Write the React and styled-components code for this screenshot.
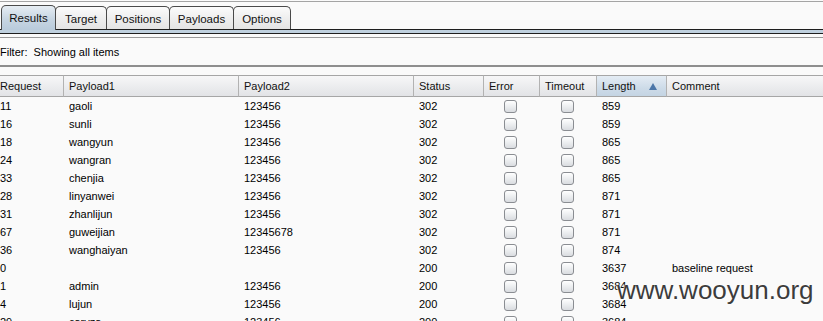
import React from 'react';
import styled, { createGlobalStyle } from 'styled-components';

const Global = createGlobalStyle`
  html, body {
    margin: 0;
    padding: 0;
    background: #fafafa;
    overflow: hidden;
  }
  body {
    font-family: "Liberation Sans", Arial, sans-serif;
    font-size: 11px;
    color: #000;
  }
`;

const Page = styled.div`
  position: relative;
  width: 823px;
  height: 321px;
  overflow: hidden;
`;

const TopRule = styled.div`
  height: 1px;
  margin-top: 1px;
  background: #a4a4a4;
`;

const TabBar = styled.div`
  display: flex;
  align-items: flex-end;
  height: 24px;
  margin-top: 3px;
  padding-left: 1px;
  border-bottom: 1px solid #1e1e1e;
`;

const Tab = styled.div`
  width: ${p => p.w}px;
  height: ${p => (p.active ? '25px' : '23px')};
  margin-bottom: ${p => (p.active ? '-1px' : '0')};
  margin-right: -1px;
  display: flex;
  align-items: center;
  justify-content: center;
  box-sizing: border-box;
  border: 1px solid #4a4a4a;
  border-bottom: none;
  border-radius: 5px 5px 0 0;
  font-size: 11.5px;
  color: #111;
  background: ${p =>
    p.active
      ? 'linear-gradient(#e6edf3, #c7d5e2 55%, #b9cbdb)'
      : 'linear-gradient(#fbfbfb, #ececec 60%, #e4e4e4)'};
  padding-top: ${p => (p.active ? '0' : '1px')};
`;

const TabBand = styled.div`
  height: 3px;
  background: #bfd0de;
  border-bottom: 1px solid #1e1e1e;
`;

const FilterBar = styled.div`
  margin-top: 3px;
  height: 26px;
  border-top: 1px solid #9a9a9a;
  border-bottom: 2px solid #8e8e8e;
  display: flex;
  align-items: center;
  padding-top: 1px;
  font-size: 11px;
  white-space: pre;
`;

const Table = styled.div`
  margin-top: 8px;
  display: grid;
  grid-template-columns: 63px 175px 175px 70px 56px 57px 70px 1fr;
`;

const HeadCell = styled.div`
  height: 22px;
  box-sizing: border-box;
  display: flex;
  align-items: center;
  justify-content: space-between;
  padding: 0 9px 0 ${p => (p.first ? 0 : 5)}px;
  border-top: 1px solid #a6a6a6;
  border-bottom: 1px solid #a6a6a6;
  border-left: ${p => (p.first ? 'none' : '1px solid #b2b2b2')};
  background: ${p =>
    p.sorted
      ? 'linear-gradient(#e4ecf4, #cddbe8 60%, #c4d4e3)'
      : 'linear-gradient(#f7f7f8, #eaebed 60%, #e2e3e6)'};
  font-size: 11px;
  color: #111;
`;

const SortArrow = styled.span`
  width: 0;
  height: 0;
  border-left: 4px solid transparent;
  border-right: 4px solid transparent;
  border-bottom: 7px solid #4b76a8;
`;

const Cell = styled.div`
  height: 18px;
  display: flex;
  align-items: center;
  justify-content: ${p => (p.center ? 'center' : 'flex-start')};
  padding-left: ${p => (p.center || p.first ? 0 : 6)}px;
  padding-right: ${p => (p.center ? 1 : 0)}px;
  white-space: nowrap;
  font-size: 11px;
`;

const Check = styled.span`
  width: 11px;
  height: 11px;
  border: 1px solid #8a8d92;
  border-radius: 3px;
  background: linear-gradient(#ffffff, #eceef0 50%, #d9dce0);
`;

const Watermark = styled.div`
  position: absolute;
  left: 617px;
  top: 275px;
  font-family: "Liberation Sans", Arial, sans-serif;
  font-size: 26px;
  color: #3c3c3c;
  text-shadow: 0 0 2px #fff, 0 0 2px #fff;
  white-space: nowrap;
`;

const tabs = [
  { label: 'Results', w: 55, active: true },
  { label: 'Target', w: 52 },
  { label: 'Positions', w: 64 },
  { label: 'Payloads', w: 65 },
  { label: 'Options', w: 58 },
];

const columns = ['Request', 'Payload1', 'Payload2', 'Status', 'Error', 'Timeout', 'Length', 'Comment'];

const rows = [
  ['11', 'gaoli', '123456', '302', '859', ''],
  ['16', 'sunli', '123456', '302', '859', ''],
  ['18', 'wangyun', '123456', '302', '865', ''],
  ['24', 'wangran', '123456', '302', '865', ''],
  ['33', 'chenjia', '123456', '302', '865', ''],
  ['28', 'linyanwei', '123456', '302', '871', ''],
  ['31', 'zhanlijun', '123456', '302', '871', ''],
  ['67', 'guweijian', '12345678', '302', '871', ''],
  ['36', 'wanghaiyan', '123456', '302', '874', ''],
  ['0', '', '', '200', '3637', 'baseline request'],
  ['1', 'admin', '123456', '200', '3684', ''],
  ['4', 'lujun', '123456', '200', '3684', ''],
  ['29', 'caryza', '123456', '200', '3684', ''],
];

export default function App() {
  return (
    <Page>
      <Global />
      <TopRule />
      <TabBar>
        {tabs.map(t => (
          <Tab key={t.label} active={t.active} w={t.w}>
            {t.label}
          </Tab>
        ))}
      </TabBar>
      <TabBand />
      <FilterBar>{'Filter:  Showing all items'}</FilterBar>
      <Table>
        {columns.map((c, i) => (
          <HeadCell key={c} first={i === 0} sorted={c === 'Length'}>
            {c}
            {c === 'Length' && <SortArrow />}
          </HeadCell>
        ))}
        {rows.map(r => (
          <React.Fragment key={r[0] + r[1]}>
            <Cell first>{r[0]}</Cell>
            <Cell>{r[1]}</Cell>
            <Cell>{r[2]}</Cell>
            <Cell>{r[3]}</Cell>
            <Cell center><Check /></Cell>
            <Cell center><Check /></Cell>
            <Cell>{r[4]}</Cell>
            <Cell>{r[5]}</Cell>
          </React.Fragment>
        ))}
      </Table>
      <Watermark>www.wooyun.org</Watermark>
    </Page>
  );
}
